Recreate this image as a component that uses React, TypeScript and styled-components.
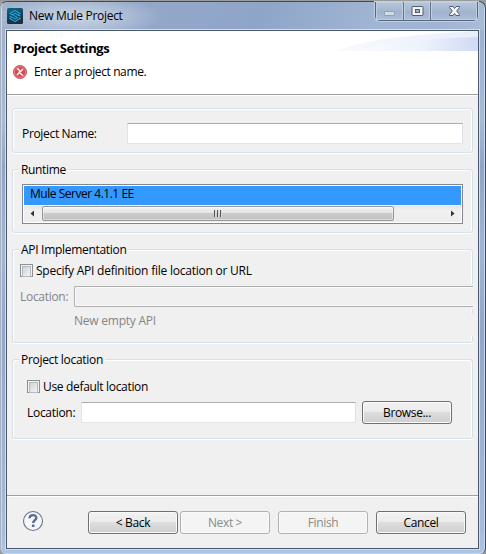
import React from "react";
import styled, { createGlobalStyle, css } from "styled-components";

const GlobalStyle = createGlobalStyle`
  body { margin: 0; background: #a5a5a0; overflow: hidden; }
  * { box-sizing: border-box; }
`;

const Frame = styled.div`
  width: 486px;
  height: 554px;
  padding: 1px 0 0;
  background: #9b9d9c;
  font: 12px/16px "Open Sans", "Noto Sans", sans-serif;
  color: #000;
`;

const Window = styled.div`
  width: 486px;
  height: 553px;
  border: 1px solid #3f4a5c;
  border-left-color: #a7b1be;
  border-bottom: 0;
  border-radius: 7px 7px 6px 6px;
  box-shadow: inset 1px 1px 0 #cbd9ea, inset -1px -1px 0 #c6d8ee;
  background:
    linear-gradient(to bottom, transparent 528px, #a9c4e5 550px),
    linear-gradient(to bottom, #a0b3d0 0, #9eb2cf 28px, #a7bad6 120px, #8fa5c8 165px, #a1b6d4 250px, #90a7cb 330px, #a8bedb 553px);
  padding: 0 6px 5px 5px;
  display: flex;
  flex-direction: column;
`;

const TitleBar = styled.header`
  height: 28px;
  flex: none;
  display: flex;
  align-items: flex-start;
  margin: 0 -5px 0 -4px;
  padding: 0 6px 0 5px;
  border-radius: 6px 6px 0 0;
  background:
    radial-gradient(ellipse 85px 22px at 75px 15px, rgba(235, 241, 248, 0.6), rgba(220, 230, 242, 0.35) 55%, transparent),
    linear-gradient(115deg, #a0b1ca 0, #94a8c8 120px, #8fa5c8 240px, #a1b6d4 350px, #9fb4d2 400px, #aabcd5 100%);
`;

const AppIcon = styled.svg`
  width: 16px;
  height: 16px;
  margin: 6px 6px 0 0;
`;

const Text = styled.span<{ $ls?: number; $dim?: boolean }>`
  white-space: pre;
  letter-spacing: ${(p) => p.$ls ?? 0}px;
  ${(p) => p.$dim && css`color: #858585;`}
`;

const WindowTitle = styled(Text)`
  flex: 1;
  margin-top: 6px;
`;

const Controls = styled.div`
  display: flex;
  height: 19px;
  border: 1px solid #56657c;
  border-top: 0;
  border-radius: 0 0 5px 5px;
  box-shadow: 0 0 0 1px #c1d0e2;
  background: linear-gradient(#b7c5d9, #a4b7d1 50%, #9fb3cf 51%, #acbed8);
`;

const ControlButton = styled.div<{ $w: number }>`
  width: ${(p) => p.$w}px;
  display: flex;
  justify-content: center;
  box-shadow: inset 0 0 0 1px #bfcde0;
  & + & { border-left: 1px solid #65748b; }
`;

const Client = styled.main`
  flex: 1;
  display: flex;
  flex-direction: column;
  border: 1px solid #4a586c;
  outline: 1px solid #d2deec;
  background: #f0f0f0;
`;

const Banner = styled.section`
  height: 65px;
  flex: none;
  display: flex;
  justify-content: space-between;
  background: #fff;
  border-bottom: 1px solid #fff;
  box-shadow: inset 0 -1px 0 #a0a0a0;
`;

const BannerText = styled.div`
  padding: 9px 0 0 6px;
`;

const BannerTitle = styled(Text)`
  display: block;
  font-size: 13px;
  font-weight: 700;
`;

const ErrorLine = styled.div`
  display: flex;
  align-items: center;
  gap: 7px;
  margin-top: 8px;
`;

const Form = styled.div`
  flex: 1;
  padding: 12px 5px 0;
`;

const Group = styled.section<{ $h: number; $gap: number }>`
  height: ${(p) => p.$h}px;
  margin-bottom: ${(p) => p.$gap}px;
  border: 1px solid #d4dfe7;
  border-radius: 3px;
  box-shadow: inset 1px 1px 0 #fff, inset -1px 0 0 #fff, 0 1px 0 #fff;
  display: flex;
  flex-direction: column;
  align-items: flex-start;
`;

const Legend = styled(Text)`
  height: 16px;
  flex: none;
  margin: -9px 0 0 6px;
  padding: 1px 2px 0;
  background: #f0f0f0;
`;

const Row = styled.div<{ $top: number; $left: number; $right?: number; $h: number }>`
  display: flex;
  align-items: center;
  flex: none;
  align-self: stretch;
  height: ${(p) => p.$h}px;
  margin: ${(p) => p.$top}px ${(p) => p.$right ?? 0}px 0 ${(p) => p.$left}px;
`;

const Label = styled(Text)<{ $w: number }>`
  width: ${(p) => p.$w}px;
  flex: none;
`;

const Input = styled.input`
  flex: 1;
  min-width: 0;
  height: 21px;
  padding: 0 4px;
  border: 1px solid #e2e3ea;
  border-top-color: #abadb3;
  border-right-color: #dbdfe6;
  border-radius: 1px;
  background: #fff;
  &:disabled {
    border: 1px solid #afafaf;
    border-right: 0;
    border-radius: 2px 0 0 2px;
    background: #f0f0f0;
    box-shadow: inset 1px 1px 0 #fafafa, inset 0 -1px 0 #fafafa, 0 -2px 0 #f0f0f0, 0 2px 0 #f0f0f0;
  }
`;

const Check = styled.span`
  width: 13px;
  height: 13px;
  flex: none;
  margin-right: 3px;
  border: 1px solid #8e8f8f;
  background: #f4f4f4;
  padding: 1px;
  &::after {
    content: "";
    display: block;
    height: 9px;
    border: 1px solid #b4b9c1;
    background: linear-gradient(135deg, #cfd2d8, #f4f4f5);
  }
`;

const ListBox = styled.div`
  width: 441px;
  height: 40px;
  margin: 7px 0 0 9px;
  padding: 1px;
  border: 1px solid #828790;
  background: #fff;
`;

const ListItem = styled.div`
  height: 19px;
  padding-left: 6px;
  background: #39f;
`;

const ScrollBar = styled.div`
  display: flex;
  align-items: flex-start;
  height: 16px;
  margin-top: 1px;
  background: linear-gradient(#e6e6e6, #f0f0f0 30%, #ededed);
`;

const ScrollArrow = styled.svg`
  width: 18px;
  height: 15px;
  flex: none;
`;

const Thumb = styled.div`
  width: 352px;
  height: 15px;
  margin-right: 49px;
  display: flex;
  align-items: center;
  justify-content: center;
  border: 1px solid #979797;
  border-radius: 2px;
  background: linear-gradient(#f3f3f3, #e5e5e6 45%, #cdcdcf 46%, #c0c0c3);
  box-shadow: inset 0 0 0 1px rgba(255, 255, 255, 0.45);
`;

const Button = styled.button`
  width: 90px;
  height: 23px;
  flex: none;
  padding: 1px 0 0;
  font: inherit;
  letter-spacing: -0.35px;
  color: #000;
  border: 1px solid #707070;
  border-radius: 3px;
  background: linear-gradient(#f2f2f2, #ebebeb 48%, #dddddd 50%, #cfcfcf);
  box-shadow: inset 0 0 0 1px #fafafa;
  &:disabled {
    color: #8a8a8a;
    border-color: #adb2b5;
    background: #f4f4f4;
  }
`;

/* Covers the frame's right edge beside the API hint. */
const EmptyApiRow = styled(Row)`
  margin-right: -1px;
  padding-bottom: 7px;
  background: #f0f0f0;
`;

const Footer = styled.footer`
  height: 53px;
  flex: none;
  display: flex;
  align-items: flex-start;
  padding: 14px 0 0 15px;
  border-top: 1px solid #a0a0a0;
  box-shadow: inset 0 1px 0 #fff;
`;

const HelpIcon = styled.svg`
  width: 22px;
  height: 22px;
  margin: 0 44px 0 0;
`;

const Nav = styled.div`
  display: flex;
  gap: 8px;
  margin-top: 1px;
`;

const Pair = styled.div`
  display: flex;
  gap: 2px;
`;

export default function App() {
  return (
    <>
      <GlobalStyle />
      <Frame>
        <Window>
          <TitleBar>
            <AppIcon viewBox="0 0 16 16">
              <defs>
                <linearGradient id="app" x1="0" y1="0" x2="0.3" y2="1">
                  <stop offset="0" stopColor="#126789" />
                  <stop offset="0.6" stopColor="#173f55" />
                  <stop offset="1" stopColor="#242c39" />
                </linearGradient>
              </defs>
              <rect width="16" height="16" rx="1.5" fill="url(#app)" />
              <g fill="none" stroke="#17a5dc" strokeWidth="1.1" strokeLinejoin="round">
                <path d="M5 6.8 2.8 5.4 8 2.5 13.2 5.4 10.8 7 8 5.3 5.5 6.8 10.8 9.8" />
                <path d="M2.6 8 8 11 10.8 9.6M13.4 8 11 6.9M4.2 9.6 2.6 10.6 8 13.6 13.4 10.6 11.8 9.6" />
              </g>
            </AppIcon>
            <WindowTitle $ls={-0.3}>New Mule Project</WindowTitle>
            <Controls>
              <ControlButton $w={27}>
                <svg width="13" height="18">
                  <rect x="1.5" y="9.5" width="10" height="4" rx="0.5" fill="#d0dbe7" stroke="#8fa1b8" />
                </svg>
              </ControlButton>
              <ControlButton $w={27}>
                <svg width="13" height="18">
                  <rect x="1" y="4.5" width="11" height="9" rx="0.5" fill="#f4f4f4" stroke="#515d70" />
                  <rect x="4.5" y="7.5" width="4" height="3" fill="#9eb1cd" stroke="#515d70" />
                </svg>
              </ControlButton>
              <ControlButton $w={47}>
                <svg width="13" height="18">
                  <path
                    d="M1.5 4.5H5L6.5 6.5 8 4.5H11.5V5.5L8.7 9 11.5 12.5V13.5H8L6.5 11.5 5 13.5H1.5V12.5L4.3 9 1.5 5.5Z"
                    fill="#f6f6f6"
                    stroke="#515d70"
                  />
                </svg>
              </ControlButton>
            </Controls>
          </TitleBar>
          <Client>
            <Banner>
              <BannerText>
                <BannerTitle $ls={-0.34}>Project Settings</BannerTitle>
                <ErrorLine>
                  <svg width="14" height="14" viewBox="0 0 14 14">
                    <circle cx="7" cy="7" r="6.5" fill="#d94b50" stroke="#c9545a" />
                    <circle cx="7" cy="7" r="5.6" fill="none" stroke="#e78a8c" strokeWidth="0.8" />
                    <path d="M3.8 4.2Q5.2 3.4 6 5L8 9Q8.8 10.5 10.2 9.8M10 4 4 10" fill="none" stroke="#fff" strokeWidth="1.5" />
                  </svg>
                  <Text $ls={-0.38}>Enter a project name.</Text>
                </ErrorLine>
              </BannerText>
              <svg width="140" height="20" viewBox="0 0 140 20">
                <defs>
                  <linearGradient id="wash">
                    <stop offset="0" stopColor="#f9fbfe" />
                    <stop offset="0.55" stopColor="#eef2fb" />
                    <stop offset="1" stopColor="#d0daf6" />
                  </linearGradient>
                  <linearGradient id="mist">
                    <stop offset="0" stopColor="#f8fafd" />
                    <stop offset="1" stopColor="#e9eefa" />
                  </linearGradient>
                </defs>
                <path d="M0 20Q30 5 140 0V20Z" fill="url(#mist)" />
                <path d="M16 20Q60 8 140 6V20Z" fill="url(#wash)" />
              </svg>
            </Banner>
            <Form>
              <Group $h={45} $gap={16}>
                <Row $top={14} $left={9} $right={9} $h={21}>
                  <Label $w={105} $ls={-0.33}>Project Name:</Label>
                  <Input />
                </Row>
              </Group>
              <Group $h={64} $gap={16}>
                <Legend $ls={-0.35}>Runtime</Legend>
                <ListBox>
                  <ListItem>
                    <Text $ls={-0.48}>Mule Server 4.1.1 EE</Text>
                  </ListItem>
                  <ScrollBar>
                    <ScrollArrow><path d="M10 4.5V10.5L6.5 7.5Z" fill="#333" /></ScrollArrow>
                    <Thumb>
                      <svg width="8" height="7">
                        <path d="M0.5 0V7M3.5 0V7M6.5 0V7" stroke="#555" />
                        <path d="M1.5 0V7M4.5 0V7M7.5 0V7" stroke="#ddd" />
                      </svg>
                    </Thumb>
                    <ScrollArrow><path d="M8 4.5V10.5L11.5 7.5Z" fill="#333" /></ScrollArrow>
                  </ScrollBar>
                </ListBox>
              </Group>
              <Group $h={94} $gap={16}>
                <Legend $ls={-0.3}>API Implementation</Legend>
                <Row $top={6} $left={7} $h={15}>
                  <Check />
                  <Text $ls={-0.23}>Specify API definition file location or URL</Text>
                </Row>
                <Row $top={8} $left={7} $right={-1} $h={21}>
                  <Label $w={54} $ls={-0.3} $dim>Location:</Label>
                  <Input disabled />
                </Row>
                <EmptyApiRow $top={6} $left={61} $h={23}>
                  <Text $ls={-0.23} $dim>New empty API</Text>
                </EmptyApiRow>
              </Group>
              <Group $h={80} $gap={0}>
                <Legend $ls={-0.3}>Project location</Legend>
                <Row $top={12} $left={14} $h={15}>
                  <Check />
                  <Text $ls={-0.32}>Use default location</Text>
                </Row>
                <Row $top={7} $left={14} $right={20} $h={23}>
                  <Label $w={54} $ls={-0.3}>Location:</Label>
                  <Input />
                  <Row $top={0} $left={6} $h={23}>
                    <Button>Browse...</Button>
                  </Row>
                </Row>
              </Group>
            </Form>
            <Footer>
              <HelpIcon viewBox="0 0 22 22">
                <circle cx="11" cy="11" r="9.5" fill="#f6f7fa" stroke="#67758f" strokeWidth="1.1" />
                <path d="M7.5 8.3C7.7 4 14.7 4.2 14.3 8 14 10.4 11.2 10.3 11.2 13" fill="none" stroke="#5c6d93" strokeWidth="2.4" />
                <rect x="9.9" y="14.5" width="2.6" height="2.5" rx="0.6" fill="#5c6d93" />
              </HelpIcon>
              <Nav>
                <Pair>
                  <Button>&lt; Back</Button>
                  <Button disabled>Next &gt;</Button>
                </Pair>
                <Button disabled>Finish</Button>
                <Button>Cancel</Button>
              </Nav>
            </Footer>
          </Client>
        </Window>
      </Frame>
    </>
  );
}
